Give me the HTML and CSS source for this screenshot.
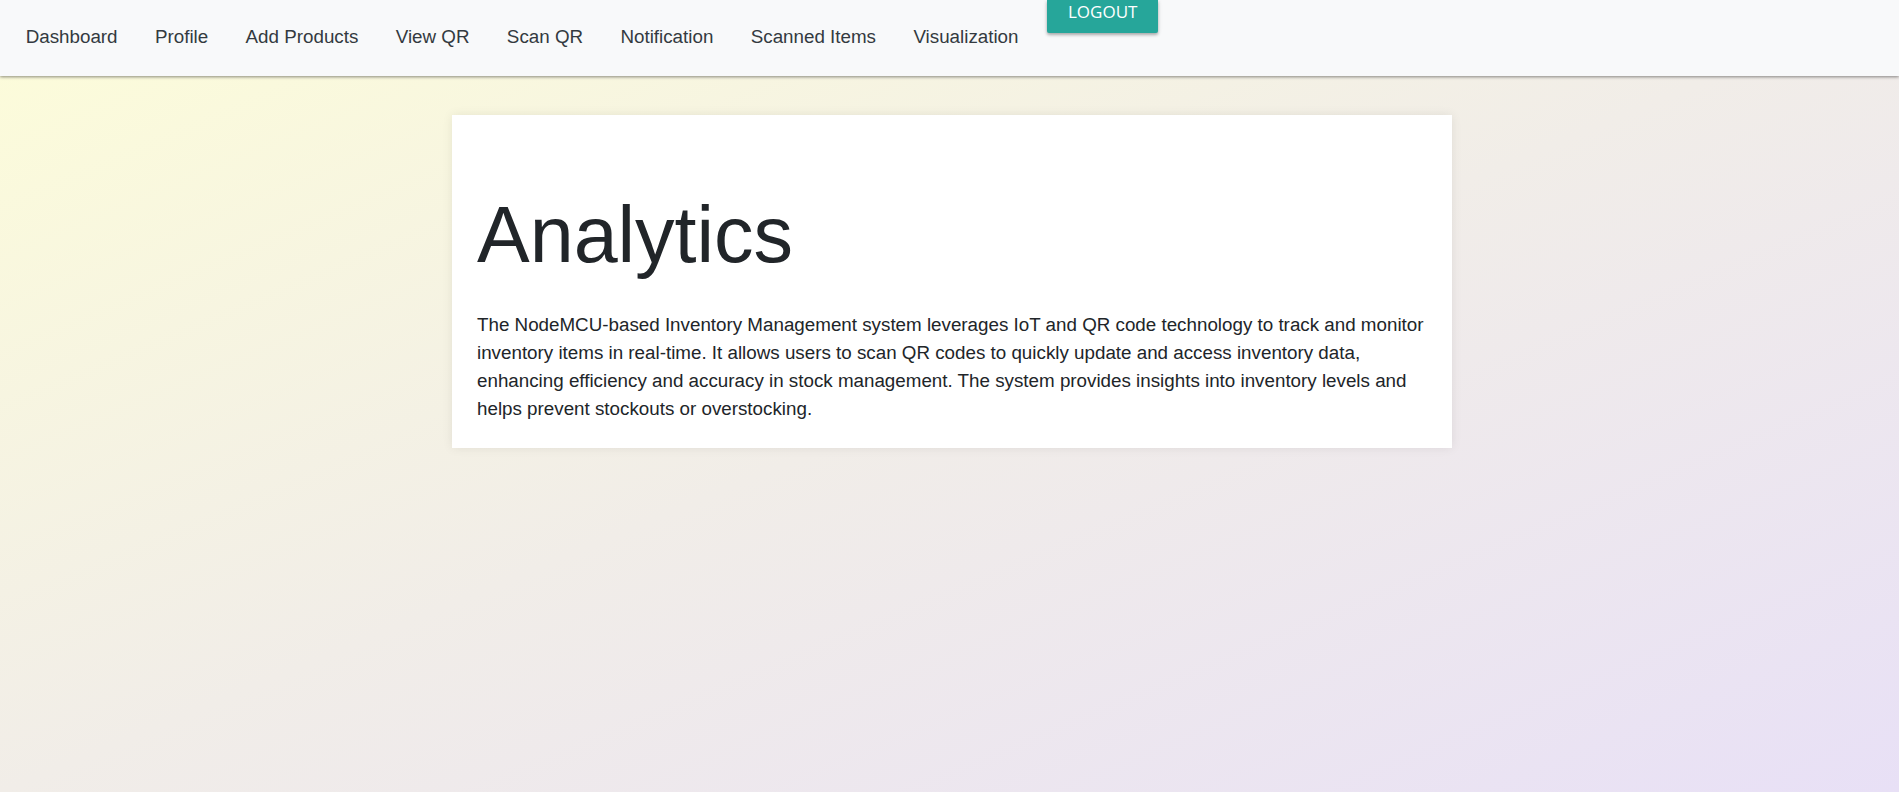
FILE: index.html
```html
<!DOCTYPE html>
<html lang="en">
<head>
<meta charset="utf-8">
<title>Analytics</title>
<link rel="stylesheet" href="styles.css">
</head>
<body>
<nav class="navbar">
  <ul class="nav-links">
    <li><a href="#">Dashboard</a></li>
    <li><a href="#">Profile</a></li>
    <li><a href="#">Add Products</a></li>
    <li><a href="#">View QR</a></li>
    <li><a href="#">Scan QR</a></li>
    <li><a href="#">Notification</a></li>
    <li><a href="#">Scanned Items</a></li>
    <li><a href="#">Visualization</a></li>
  </ul>
  <a class="logout-btn" href="#">LOGOUT</a>
</nav>
<main class="content">
  <section class="card">
    <h1 class="card-title">Analytics</h1>
    <p class="card-text">The NodeMCU-based Inventory Management system leverages IoT and QR code technology to track and monitor inventory items in real-time. It allows users to scan QR codes to quickly update and access inventory data, enhancing efficiency and accuracy in stock management. The system provides insights into inventory levels and helps prevent stockouts or overstocking.</p>
  </section>
</main>
</body>
</html>
```

FILE: styles.css
```css
html, body {
  margin: 0;
  padding: 0;
}
body {
  min-height: 100vh;
  font-family: "Liberation Sans", Arial, sans-serif;
  color: #212529;
  background: linear-gradient(to bottom right, #fdfdd9 0%, #f1ede8 50%, #e8e0f6 100%);
}
.navbar {
  height: 76px;
  background: #f8f9fa;
  box-shadow: 0 1px 3px rgba(0, 0, 0, 0.45);
  display: flex;
  align-items: flex-start;
  padding-left: 7px;
  box-sizing: border-box;
  position: relative;
}
.nav-links {
  list-style: none;
  margin: 0;
  padding: 0;
  display: flex;
  align-self: center;
  padding-bottom: 2px;
}
.nav-links a {
  display: block;
  padding: 0 18.7px;
  font-size: 18.8px;
  line-height: 22px;
  color: #333a40;
  text-decoration: none;
}
.logout-btn {
  display: block;
  margin-left: 10px;
  width: 111px;
  height: 33px;
  box-sizing: border-box;
  text-align: center;
  background: #26a69a;
  color: #fff;
  font-family: "Open Sans", sans-serif;
  font-size: 17px;
  line-height: 24px;
  text-decoration: none;
  border-radius: 0 0 2px 2px;
  box-shadow: 0 2px 3px rgba(0, 0, 0, 0.25), 0 1px 5px rgba(0, 0, 0, 0.12);
}
.content {
  padding-top: 39px;
  display: flex;
  justify-content: center;
}
.card {
  width: 1000px;
  box-sizing: border-box;
  margin-left: 4px;
  background: #fff;
  padding: 72px 24px 25px 25.5px;
  box-shadow: 0 0 10px rgba(0, 0, 0, 0.08);
}
.card-title {
  margin: 0 0 28px;
  font-size: 79px;
  font-weight: 300;
  line-height: 96px;
  color: #212529;
}
.card-text {
  margin: 0;
  font-size: 18.8px;
  line-height: 28px;
  color: #212529;
}
```
